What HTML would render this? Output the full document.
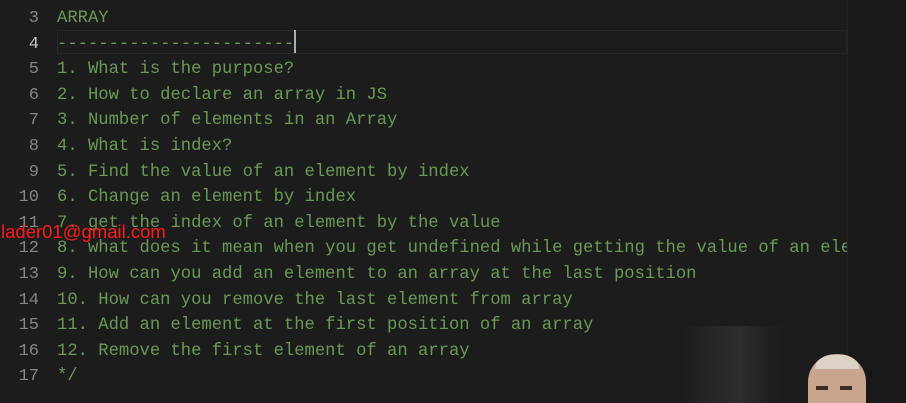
<!DOCTYPE html>
<html style="overflow:hidden;height:403px"><head><style>
body{margin:0;width:906px;height:403px;background:#1c1c1d;overflow:hidden;position:relative;font-family:"Liberation Mono",monospace;}
.ln{position:absolute;left:0;width:39px;text-align:right;color:#858585;font-size:17px;line-height:25.6px;}
.tx{position:absolute;left:57px;color:#6a9955;font-size:17.2px;line-height:25.6px;white-space:pre;}
</style></head><body>
<div style="position:absolute;left:57px;top:30px;width:790px;height:24px;border:1px solid #282828;box-sizing:border-box"></div>
<div style="position:absolute;left:847px;top:0;width:59px;height:403px;background:#181818;border-left:1px solid #252525"></div>
<div style="position:absolute;left:680px;top:326px;width:110px;height:77px;background:linear-gradient(90deg,#1c1c1d,#262626 30%,#2e2e2e 55%,#1f1f1f 80%,#1c1c1d)"></div>
<div id="c" style="position:absolute;left:0;top:6px;width:847px;overflow:hidden;height:397px">
</div>
<div style="position:absolute;left:808px;top:354px;width:58px;height:49px;border-radius:28px 28px 0 0;background:#c9a58e;overflow:hidden"><div style="position:absolute;left:7px;top:1px;width:44px;height:14px;border-radius:20px 20px 0 0;background:#ddd2c8"></div><div style="position:absolute;left:8px;top:32px;width:12px;height:4px;background:#3a2a22"></div><div style="position:absolute;left:32px;top:32px;width:12px;height:4px;background:#3a2a22"></div></div>
<div style="position:absolute;left:1px;top:221px;color:#ff1a1a;font-family:'Liberation Sans',sans-serif;font-size:18.5px;">lader01@gmail.com</div>
<div style="position:absolute;left:294px;top:30px;width:2px;height:23px;background:#aeafad"></div>
<script>
var L=["ARRAY","-----------------------","1. What is the purpose?","2. How to declare an array in JS","3. Number of elements in an Array","4. What is index?","5. Find the value of an element by index","6. Change an element by index","7. get the index of an element by the value","8. what does it mean when you get undefined while getting the value of an element","9. How can you add an element to an array at the last position","10. How can you remove the last element from array","11. Add an element at the first position of an array","12. Remove the first element of an array","*/"];
var h="";for(var i=0;i<L.length;i++){var t=i*25.6;h+='<div class="ln" style="top:'+t+'px;'+(i==1?'color:#c6c6c6':'')+'">'+(i+3)+'</div><div class="tx" style="top:'+t+'px">'+L[i]+'</div>';}
document.getElementById('c').innerHTML=h;
</script>
</body></html>
